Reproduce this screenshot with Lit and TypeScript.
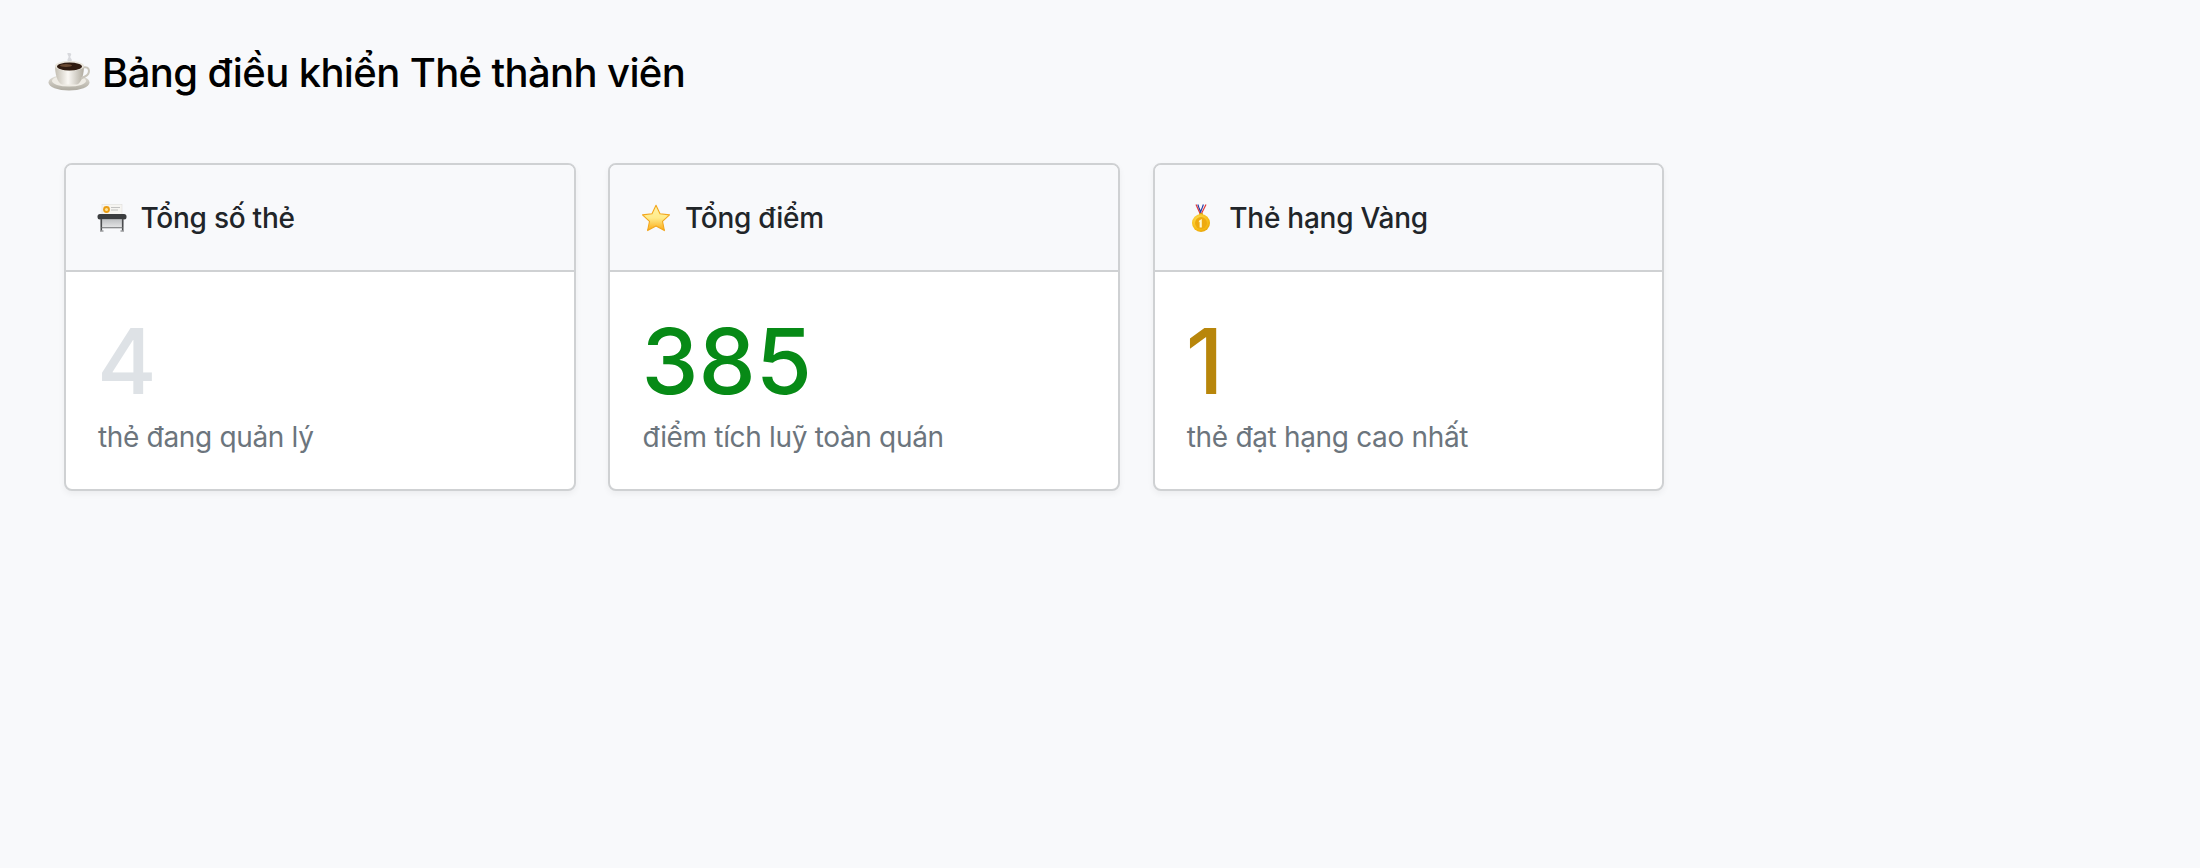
import { LitElement, html, css, svg } from "lit";
import { customElement } from "lit/decorators.js";

const coffee = svg`<svg class="e-title" viewBox="0 1.500 44 40">
  <defs>
    <linearGradient id="cup" x1="0" x2="1"><stop offset="0" stop-color="#c3beb2"/><stop offset=".45" stop-color="#faf8f4"/><stop offset="1" stop-color="#b0ab9f"/></linearGradient>
    <linearGradient id="sau" x1="0" y1="0" x2="0" y2="1"><stop offset="0" stop-color="#e6e3db"/><stop offset="1" stop-color="#aeaaa0"/></linearGradient>
  </defs>
  <path d="M20 1c-2 2 2 3 0 6s2 3 0 5c3-1 5-3 3-5s1-3 0-5z" fill="#d4d5d9" opacity=".9"/>
  <ellipse cx="21" cy="31" rx="20.500" ry="8" fill="url(#sau)"/>
  <ellipse cx="21" cy="29.500" rx="17" ry="5.500" fill="#efece5"/>
  <path d="M7 14h29c0 8-2 17-7 19H14C9 31 7 22 7 14z" fill="url(#cup)"/>
  <path d="M35 16c7-2 8 6 2 9l-4 2" fill="none" stroke="#c9c5bb" stroke-width="2"/>
  <ellipse cx="21.500" cy="14.500" rx="14.500" ry="5" fill="#e9e5dc"/>
  <ellipse cx="21.500" cy="15" rx="12.500" ry="4" fill="#2f1b10"/>
  <ellipse cx="18" cy="14" rx="6" ry="1.500" fill="#6a4a32"/>
</svg>`;

const printer = svg`<svg class="e-card" viewBox="0 0 30 28">
  <defs><linearGradient id="pb" x1="0" y1="0" x2="0" y2="1"><stop offset="0" stop-color="#bfc1c3"/><stop offset="1" stop-color="#e4e5e6"/></linearGradient></defs>
  <rect x="5" y="0.500" width="20" height="12" fill="#f6f5f1" stroke="#dcdbd6" stroke-width=".5"/>
  <circle cx="9.500" cy="5.500" r="3.400" fill="#ea9d14"/>
  <circle cx="9.500" cy="5.500" r="1.500" fill="#fbe39a"/>
  <path d="M14 3.500h9M14 6h7" stroke="#b5b5b5" stroke-width=".8"/>
  <rect x="0.500" y="10" width="29" height="5.500" rx="2.500" fill="#3b3d3f"/>
  <rect x="3.500" y="15.500" width="23" height="8" fill="url(#pb)"/>
  <path d="M4.300 15v11.500M25.700 15v11.500" stroke="#4a4c4e" stroke-width="1.600"/>
  <path d="M3 27h3.500M23.500 27h3.500M4 23.700h22" stroke="#6a6c6e" stroke-width="1.100"/>
</svg>`;

const star = svg`<svg class="e-card" viewBox="0 0 30 28">
  <defs><linearGradient id="st" x1="0" y1="0" x2="0" y2="1"><stop offset="0" stop-color="#fff3a8"/><stop offset=".5" stop-color="#ffeb8a"/><stop offset="1" stop-color="#fbaa14"/></linearGradient></defs>
  <path d="M15 1.200l4 8.600 9.500 1.100-7 6.400 1.900 9.300L15 22l-8.400 4.600 1.900-9.300-7-6.400 9.500-1.100z" fill="url(#st)" stroke="#f2a71e" stroke-width="1.100" stroke-linejoin="round"/>
</svg>`;

const medal = svg`<svg class="e-card medal" viewBox="0 0 30 28">
  <defs><radialGradient id="md" cx=".4" cy=".35" r=".8"><stop offset="0" stop-color="#ffe45a"/><stop offset=".7" stop-color="#f4b50f"/><stop offset="1" stop-color="#d8920a"/></radialGradient></defs>
  <path d="M10 0.500l4.500 10M15 10.500L20 0.500" stroke="#e0393a" stroke-width="1.200" fill="none"/>
  <path d="M11.800 0.500l2.800 7.500 2.800-7.500" stroke="#2a3fa8" stroke-width="1.200" fill="none"/>
  <path d="M13.500 0.500l1 4 1-4" stroke="#fafafa" stroke-width="1" fill="none"/>
  <rect x="13" y="9" width="4" height="4" rx="1" fill="#d09a14"/>
  <circle cx="15" cy="19" r="9" fill="url(#md)"/>
  <circle cx="15" cy="19" r="6" fill="#eeaa10"/>
  <path d="M13.200 16.400l2.600-1.400v8.400h-2.200v-5.600l-1 .5z" fill="#fff6cc"/>
</svg>`;

@customElement("app-root")
export class AppRoot extends LitElement {
  static styles = css`
    :host {
      display: block;
      min-height: 868px;
      background: #f8f9fb;
      font-family: Inter, "Noto Sans", sans-serif;
      color: #212529;
    }
    .title {
      margin: 0;
      padding: 44px 0 0 48px;
      display: flex;
      align-items: center;
      gap: 10px;
      font-size: 40px;
      letter-spacing: -0.62px;
      line-height: 58px;
      font-weight: 500;
      color: #000;
    }
    .e-title { width: 44px; height: 40px; flex: none; }
    .cards {
      display: flex;
      gap: 32.9px;
      padding: 61px 0 0 64px;
    }
    .card {
      width: 511.5px;
      box-sizing: border-box;
      background: #fff;
      border: 2px solid #cfd1d3;
      border-radius: 8px;
      box-shadow: 0 3px 6px rgba(0, 0, 0, 0.05);
      overflow: hidden;
    }
    .head {
      display: flex;
      align-items: center;
      gap: 13.500px;
      height: 107px;
      box-sizing: border-box;
      padding: 0 31px;
      background: #f8f9fb;
      border-bottom: 2px solid #cfd1d3;
      font-size: 28px;
      letter-spacing: -0.25px;
      font-weight: 500;
    }
    .e-card { width: 30px; height: 28px; flex: none; }
    .body { padding: 36px 32px 0; height: 216.500px; box-sizing: border-box; }
    .num { font-size: 91px; line-height: 106px; font-weight: 500; margin-left: -1px; }
    .sub { font-size: 28px; letter-spacing: -0.33px; line-height: 40px; color: #6c757d; margin-top: 2.500px; }
    .grey { color: #dee2e6; }
    .green { color: #078a16; }
    .gold { color: #b8860b; }
  `;

  render() {
    return html`
      <h1 class="title">${coffee}<span>Bảng điều khiển Thẻ thành viên</span></h1>
      <div class="cards">
        ${[
          [printer, "Tổng số thẻ", "4", "grey", "thẻ đang quản lý"],
          [star, "Tổng điểm", "385", "green", "điểm tích luỹ toàn quán"],
          [medal, "Thẻ hạng Vàng", "1", "gold", "thẻ đạt hạng cao nhất"],
        ].map(
          ([icon, t, n, c, s]) => html`
            <div class="card">
              <div class="head">${icon}<span>${t}</span></div>
              <div class="body">
                <div class="num ${c}">${n}</div>
                <div class="sub">${s}</div>
              </div>
            </div>
          `
        )}
      </div>
    `;
  }
}
